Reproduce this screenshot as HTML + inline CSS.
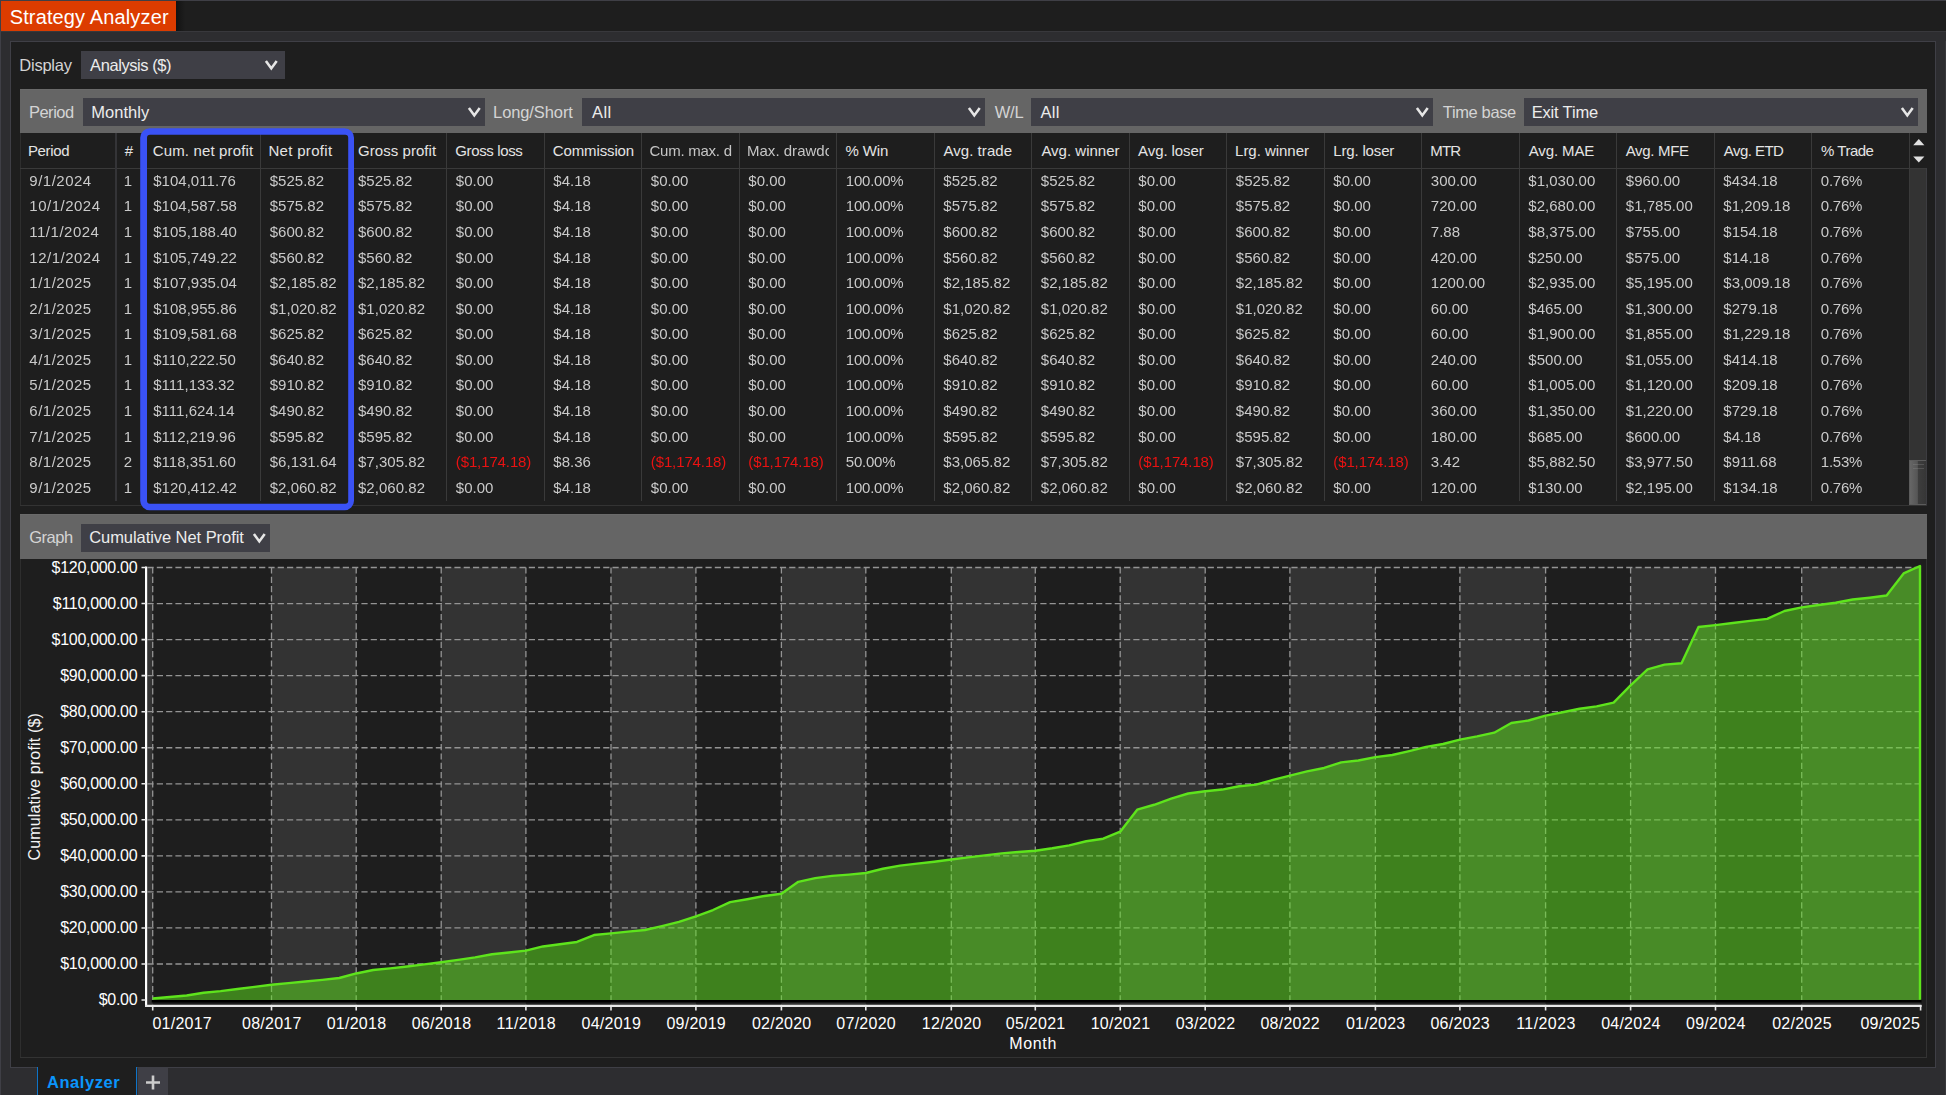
<!DOCTYPE html>
<html lang="en"><head><meta charset="utf-8"><title>Strategy Analyzer</title><style>
html,body{margin:0;padding:0}
body{width:1946px;height:1095px;overflow:hidden;position:relative;background:#2d2d30;font-family:"Liberation Sans",sans-serif}
.r{position:absolute;display:block}
.g{position:absolute;left:0;top:0;width:1946px;height:508px;will-change:transform}
.t{position:absolute;display:block;white-space:nowrap;line-height:1;font-family:"Liberation Sans",sans-serif}
</style></head><body>
<div class="r" style="left:0.00px;top:0.00px;width:1946.00px;height:1.00px;background:#3f3f46;"></div>
<div class="r" style="left:0.00px;top:0.00px;width:1.00px;height:1095.00px;background:#3f3f46;"></div>
<div class="r" style="left:1.00px;top:1.00px;width:1945.00px;height:30.20px;background:#1e1e1e;"></div>
<div class="r" style="left:1.00px;top:31.20px;width:1945.00px;height:1.20px;background:#38383c;"></div>
<div class="r" style="left:176px;top:1px;width:9px;height:30.2px;background:linear-gradient(90deg,#121212,#1e1e1e)"></div>
<div class="r" style="left:1945.00px;top:41.00px;width:1.00px;height:1054.00px;background:#38383c;"></div>
<div class="r" style="left:1.00px;top:1.00px;width:175.00px;height:30.30px;background:#dc3c00;"></div>
<span class="t" style="left:9.70px;top:7px;font-size:20px;color:#ffffff;letter-spacing:0.132px;">Strategy Analyzer</span>
<div class="r" style="left:10px;top:41px;width:1926px;height:1026.5px;box-sizing:border-box;border:1px solid #3f3f46;background:#1e1e1e"></div>
<span class="t" style="left:19.28px;top:57px;font-size:16.5px;color:#d4d4d4;letter-spacing:-0.229px;">Display</span>
<div class="r" style="left:80.50px;top:51.10px;width:204.60px;height:28.10px;background:#3f3f46;"></div>
<span class="t" style="left:90.10px;top:57px;font-size:16.5px;color:#ececec;letter-spacing:-0.433px;">Analysis ($)</span>
<svg class="r" style="left:261.90px;top:58.20px" width="18.60" height="13.40" viewBox="261.90 58.20 18.60 13.40"><path d="M265.80 61.20 L271.20 68.60 L276.60 61.20" fill="none" stroke="#e6e6e6" stroke-width="2.6" stroke-linejoin="miter"/></svg>
<div class="r" style="left:20.00px;top:88.50px;width:1907.00px;height:44.80px;background:#656565;"></div>
<div class="r" style="left:20.00px;top:88.50px;width:1907.00px;height:1.00px;background:#6a6a6a;"></div>
<span class="t" style="left:28.88px;top:104px;font-size:16.5px;color:#d4d4d4;letter-spacing:-0.466px;">Period</span>
<div class="r" style="left:83.00px;top:98.00px;width:402.00px;height:28.00px;background:#3f3f46;"></div>
<span class="t" style="left:91.28px;top:104px;font-size:16.5px;color:#ececec;letter-spacing:0.018px;">Monthly</span>
<svg class="r" style="left:465.20px;top:104.90px" width="18.60" height="13.40" viewBox="465.20 104.90 18.60 13.40"><path d="M469.10 107.90 L474.50 115.30 L479.90 107.90" fill="none" stroke="#e6e6e6" stroke-width="2.6" stroke-linejoin="miter"/></svg>
<span class="t" style="left:493.08px;top:104px;font-size:16.5px;color:#d4d4d4;letter-spacing:-0.103px;">Long/Short</span>
<div class="r" style="left:582.20px;top:98.00px;width:402.80px;height:28.00px;background:#3f3f46;"></div>
<span class="t" style="left:592.00px;top:104px;font-size:16.5px;color:#ececec;letter-spacing:0.387px;">All</span>
<svg class="r" style="left:964.70px;top:104.90px" width="18.60" height="13.40" viewBox="964.70 104.90 18.60 13.40"><path d="M968.60 107.90 L974.00 115.30 L979.40 107.90" fill="none" stroke="#e6e6e6" stroke-width="2.6" stroke-linejoin="miter"/></svg>
<span class="t" style="left:994.70px;top:104px;font-size:16.5px;color:#d4d4d4;letter-spacing:-0.178px;">W/L</span>
<div class="r" style="left:1031.00px;top:98.00px;width:402.00px;height:28.00px;background:#3f3f46;"></div>
<span class="t" style="left:1040.40px;top:104px;font-size:16.5px;color:#ececec;letter-spacing:0.387px;">All</span>
<svg class="r" style="left:1412.70px;top:104.90px" width="18.60" height="13.40" viewBox="1412.70 104.90 18.60 13.40"><path d="M1416.60 107.90 L1422.00 115.30 L1427.40 107.90" fill="none" stroke="#e6e6e6" stroke-width="2.6" stroke-linejoin="miter"/></svg>
<span class="t" style="left:1442.87px;top:104px;font-size:16.5px;color:#d4d4d4;letter-spacing:-0.380px;">Time base</span>
<div class="r" style="left:1523.50px;top:98.00px;width:394.50px;height:28.00px;background:#3f3f46;"></div>
<span class="t" style="left:1531.68px;top:104px;font-size:16.5px;color:#ececec;letter-spacing:-0.172px;">Exit Time</span>
<svg class="r" style="left:1897.70px;top:104.90px" width="18.60" height="13.40" viewBox="1897.70 104.90 18.60 13.40"><path d="M1901.60 107.90 L1907.00 115.30 L1912.40 107.90" fill="none" stroke="#e6e6e6" stroke-width="2.6" stroke-linejoin="miter"/></svg>
<div class="r" style="left:20.00px;top:133.30px;width:1.00px;height:372.50px;background:#2e2e2e;"></div>
<div class="r" style="left:20.00px;top:504.80px;width:1907.00px;height:1.00px;background:#333333;"></div>
<div class="r" style="left:1909.30px;top:168.00px;width:17.70px;height:336.80px;background:#333333;"></div>
<div class="r" style="left:20.00px;top:167.60px;width:1907.00px;height:1.00px;background:#3a3a3a;"></div>
<div class="r" style="left:145.80px;top:133.30px;width:1.00px;height:368.20px;background:#3a3a3a;"></div>
<div class="r" style="left:260.10px;top:133.30px;width:1.00px;height:368.20px;background:#3a3a3a;"></div>
<div class="r" style="left:348.50px;top:133.30px;width:1.00px;height:368.20px;background:#3a3a3a;"></div>
<div class="r" style="left:446.30px;top:133.30px;width:1.00px;height:368.20px;background:#3a3a3a;"></div>
<div class="r" style="left:543.80px;top:133.30px;width:1.00px;height:368.20px;background:#3a3a3a;"></div>
<div class="r" style="left:641.30px;top:133.30px;width:1.00px;height:368.20px;background:#3a3a3a;"></div>
<div class="r" style="left:738.80px;top:133.30px;width:1.00px;height:368.20px;background:#3a3a3a;"></div>
<div class="r" style="left:836.30px;top:133.30px;width:1.00px;height:368.20px;background:#3a3a3a;"></div>
<div class="r" style="left:933.80px;top:133.30px;width:1.00px;height:368.20px;background:#3a3a3a;"></div>
<div class="r" style="left:1031.30px;top:133.30px;width:1.00px;height:368.20px;background:#3a3a3a;"></div>
<div class="r" style="left:1128.80px;top:133.30px;width:1.00px;height:368.20px;background:#3a3a3a;"></div>
<div class="r" style="left:1226.30px;top:133.30px;width:1.00px;height:368.20px;background:#3a3a3a;"></div>
<div class="r" style="left:1323.80px;top:133.30px;width:1.00px;height:368.20px;background:#3a3a3a;"></div>
<div class="r" style="left:1421.30px;top:133.30px;width:1.00px;height:368.20px;background:#3a3a3a;"></div>
<div class="r" style="left:1518.80px;top:133.30px;width:1.00px;height:368.20px;background:#3a3a3a;"></div>
<div class="r" style="left:1616.30px;top:133.30px;width:1.00px;height:368.20px;background:#3a3a3a;"></div>
<div class="r" style="left:1713.80px;top:133.30px;width:1.00px;height:368.20px;background:#3a3a3a;"></div>
<div class="r" style="left:1811.30px;top:133.30px;width:1.00px;height:368.20px;background:#3a3a3a;"></div>
<div class="r" style="left:1908.80px;top:133.30px;width:1.00px;height:368.20px;background:#3a3a3a;"></div>
<div class="r" style="left:114.70px;top:133.30px;width:2.40px;height:368.20px;background:#343437;"></div>
<div class="r" style="left:1909px;top:459.6px;width:17.6px;height:45.6px;box-sizing:border-box;border:1px solid #5c5c5c;border-right-color:#4a4a4e;background:linear-gradient(90deg,#666666 0%,#565656 46%,#3d3d3d 52%,#363636 100%)"></div>
<div class="r" style="left:1913.30px;top:464.00px;width:10.70px;height:1.00px;background:rgba(140,140,140,0.32);"></div>
<div class="r" style="left:1913.30px;top:468.30px;width:10.70px;height:1.00px;background:rgba(140,140,140,0.32);"></div>
<div class="r" style="left:1926.30px;top:168.00px;width:0.70px;height:337.00px;background:#3c3c40;"></div>
<svg class="r" style="left:1909px;top:134px" width="18" height="33" viewBox="1909 134 18 33"><path d="M1913.2 145.2 L1918.8 139 L1924.4 145.2 Z" fill="#e0e0e0"/><path d="M1913.2 156.4 L1924.4 156.4 L1918.8 162.6 Z" fill="#e0e0e0"/></svg>
<span class="t" style="left:27.90px;top:143px;font-size:15px;color:#e4e4e4;letter-spacing:-0.344px;">Period</span>
<span class="t" style="left:124.80px;top:143px;font-size:15px;color:#e4e4e4;">#</span>
<span class="t" style="left:152.65px;top:143px;font-size:15px;color:#e4e4e4;letter-spacing:0.155px;">Cum. net profit</span>
<span class="t" style="left:268.40px;top:143px;font-size:15px;color:#e4e4e4;letter-spacing:0.324px;">Net profit</span>
<span class="t" style="left:358.05px;top:143px;font-size:15px;color:#e4e4e4;letter-spacing:0.048px;">Gross profit</span>
<span class="t" style="left:455.25px;top:143px;font-size:15px;color:#e4e4e4;letter-spacing:-0.365px;">Gross loss</span>
<span class="t" style="left:552.85px;top:143px;font-size:15px;color:#e4e4e4;letter-spacing:-0.132px;">Commission</span>
<span class="t" style="left:845.48px;top:143px;font-size:15px;color:#e4e4e4;letter-spacing:-0.107px;">% Win</span>
<span class="t" style="left:943.40px;top:143px;font-size:15px;color:#e4e4e4;letter-spacing:0.060px;">Avg. trade</span>
<span class="t" style="left:1041.40px;top:143px;font-size:15px;color:#e4e4e4;">Avg. winner</span>
<span class="t" style="left:1138.10px;top:143px;font-size:15px;color:#e4e4e4;letter-spacing:-0.093px;">Avg. loser</span>
<span class="t" style="left:1235.10px;top:143px;font-size:15px;color:#e4e4e4;letter-spacing:-0.037px;">Lrg. winner</span>
<span class="t" style="left:1333.20px;top:143px;font-size:15px;color:#e4e4e4;letter-spacing:-0.153px;">Lrg. loser</span>
<span class="t" style="left:1430.20px;top:143px;font-size:15px;color:#e4e4e4;letter-spacing:-0.764px;">MTR</span>
<span class="t" style="left:1528.70px;top:143px;font-size:15px;color:#e4e4e4;letter-spacing:-0.115px;">Avg. MAE</span>
<span class="t" style="left:1625.70px;top:143px;font-size:15px;color:#e4e4e4;letter-spacing:-0.309px;">Avg. MFE</span>
<span class="t" style="left:1723.80px;top:143px;font-size:15px;color:#e4e4e4;letter-spacing:-0.539px;">Avg. ETD</span>
<span class="t" style="left:1821.07px;top:143px;font-size:15px;color:#e4e4e4;letter-spacing:-0.495px;">% Trade</span>
<div class="r" style="left:20.00px;top:514.40px;width:1907.00px;height:44.50px;background:#656565;"></div>
<div class="r" style="left:20.00px;top:514.40px;width:1907.00px;height:1.00px;background:#6a6a6a;"></div>
<span class="t" style="left:29.17px;top:529px;font-size:16.5px;color:#d4d4d4;letter-spacing:-0.452px;">Graph</span>
<div class="r" style="left:81.00px;top:524.00px;width:189.00px;height:28.00px;background:#3f3f46;"></div>
<span class="t" style="left:89.18px;top:529px;font-size:16.5px;color:#ececec;letter-spacing:-0.061px;">Cumulative Net Profit</span>
<svg class="r" style="left:249.90px;top:530.90px" width="18.60" height="13.40" viewBox="249.90 530.90 18.60 13.40"><path d="M253.80 533.90 L259.20 541.30 L264.60 533.90" fill="none" stroke="#e6e6e6" stroke-width="2.6" stroke-linejoin="miter"/></svg>
<div class="r" style="left:20.00px;top:558.90px;width:1.00px;height:498.60px;background:#2e2e2e;"></div>
<div class="r" style="left:1926.00px;top:558.90px;width:1.00px;height:498.60px;background:#333333;"></div>
<div class="r" style="left:20.00px;top:1056.50px;width:1907.00px;height:1.00px;background:#333333;"></div>
<svg class="r" style="left:0;top:555px" width="1946" height="500" viewBox="0 555 1946 500" font-family="Liberation Sans, sans-serif"><rect x="147.2" y="567.4" width="5.50" height="437.40" fill="#333333"/><rect x="271.50" y="567.4" width="84.70" height="437.40" fill="#333333"/><rect x="441.20" y="567.4" width="84.70" height="437.40" fill="#333333"/><rect x="611.00" y="567.4" width="84.90" height="437.40" fill="#333333"/><rect x="781.40" y="567.4" width="84.40" height="437.40" fill="#333333"/><rect x="951.30" y="567.4" width="84.00" height="437.40" fill="#333333"/><rect x="1120.20" y="567.4" width="85.00" height="437.40" fill="#333333"/><rect x="1289.90" y="567.4" width="85.50" height="437.40" fill="#333333"/><rect x="1459.90" y="567.4" width="85.70" height="437.40" fill="#333333"/><rect x="1630.60" y="567.4" width="84.90" height="437.40" fill="#333333"/><rect x="1801.70" y="567.4" width="118.90" height="437.40" fill="#333333"/><path d="M147.5 964.00H1921M147.5 927.96H1921M147.5 891.91H1921M147.5 855.87H1921M147.5 819.82H1921M147.5 783.78H1921M147.5 747.73H1921M147.5 711.69H1921M147.5 675.64H1921M147.5 639.60H1921M147.5 603.55H1921M147.5 567.51H1921M152.70 567.4V1004.8M271.50 567.4V1004.8M356.20 567.4V1004.8M441.20 567.4V1004.8M525.90 567.4V1004.8M611.00 567.4V1004.8M695.90 567.4V1004.8M781.40 567.4V1004.8M865.80 567.4V1004.8M951.30 567.4V1004.8M1035.30 567.4V1004.8M1120.20 567.4V1004.8M1205.20 567.4V1004.8M1289.90 567.4V1004.8M1375.40 567.4V1004.8M1459.90 567.4V1004.8M1545.60 567.4V1004.8M1630.60 567.4V1004.8M1715.50 567.4V1004.8M1801.70 567.4V1004.8" fill="none" stroke="#949494" stroke-width="1.3" stroke-dasharray="6.2 3.1"/><path d="M152.70 998.50 L169.67 997.05 L186.64 995.44 L203.61 992.78 L220.59 991.15 L237.56 989.01 L254.53 986.87 L271.50 984.74 L288.44 983.12 L305.38 981.50 L322.32 979.87 L339.26 977.98 L356.20 973.45 L373.20 970.03 L390.20 968.36 L407.20 966.49 L424.20 964.35 L441.20 962.20 L458.14 959.83 L475.08 957.35 L492.02 954.28 L508.96 952.54 L525.90 950.67 L542.92 946.45 L559.94 944.25 L576.96 941.95 L593.98 935.03 L611.00 933.40 L627.98 931.68 L644.96 929.96 L661.94 926.05 L678.92 921.87 L695.90 916.30 L713.00 910.03 L730.10 902.13 L747.20 899.20 L764.30 895.96 L781.40 893.78 L798.28 881.81 L815.16 878.09 L832.04 875.92 L848.92 874.60 L865.80 873.00 L882.90 868.78 L900.00 865.66 L917.10 863.65 L934.20 861.69 L951.30 859.44 L968.10 857.36 L984.90 855.35 L1001.70 853.37 L1018.50 852.02 L1035.30 850.69 L1052.28 848.25 L1069.26 845.31 L1086.24 841.29 L1103.22 838.71 L1120.20 831.67 L1137.20 809.70 L1154.20 804.77 L1171.20 798.59 L1188.20 793.52 L1205.20 791.30 L1222.14 789.56 L1239.08 786.21 L1256.02 784.57 L1272.96 779.89 L1289.90 775.60 L1307.00 771.40 L1324.10 767.97 L1341.20 762.40 L1358.30 760.45 L1375.40 757.18 L1392.30 755.01 L1409.20 751.06 L1426.10 746.82 L1443.00 744.02 L1459.90 739.56 L1477.04 736.43 L1494.18 732.68 L1511.32 722.98 L1528.46 720.51 L1545.60 715.56 L1562.60 712.20 L1579.60 708.80 L1596.60 706.43 L1613.60 702.70 L1630.60 685.40 L1647.58 669.38 L1664.56 664.62 L1681.54 663.30 L1698.52 627.03 L1715.50 625.14 L1732.74 623.06 L1749.98 620.90 L1767.22 618.88 L1784.46 611.00 L1801.70 607.32 L1818.69 605.06 L1835.67 602.75 L1852.66 599.47 L1869.64 597.70 L1886.63 595.55 L1903.61 573.45 L1920.00 566.02 L1920.00 1000.05 L152.70 1000.05 Z" fill="#5ee41c" fill-opacity="0.50"/><path d="M151.7 1001.25H1921.5" stroke="#000000" stroke-width="2.5"/><path d="M152.70 998.50 L169.67 997.05 L186.64 995.44 L203.61 992.78 L220.59 991.15 L237.56 989.01 L254.53 986.87 L271.50 984.74 L288.44 983.12 L305.38 981.50 L322.32 979.87 L339.26 977.98 L356.20 973.45 L373.20 970.03 L390.20 968.36 L407.20 966.49 L424.20 964.35 L441.20 962.20 L458.14 959.83 L475.08 957.35 L492.02 954.28 L508.96 952.54 L525.90 950.67 L542.92 946.45 L559.94 944.25 L576.96 941.95 L593.98 935.03 L611.00 933.40 L627.98 931.68 L644.96 929.96 L661.94 926.05 L678.92 921.87 L695.90 916.30 L713.00 910.03 L730.10 902.13 L747.20 899.20 L764.30 895.96 L781.40 893.78 L798.28 881.81 L815.16 878.09 L832.04 875.92 L848.92 874.60 L865.80 873.00 L882.90 868.78 L900.00 865.66 L917.10 863.65 L934.20 861.69 L951.30 859.44 L968.10 857.36 L984.90 855.35 L1001.70 853.37 L1018.50 852.02 L1035.30 850.69 L1052.28 848.25 L1069.26 845.31 L1086.24 841.29 L1103.22 838.71 L1120.20 831.67 L1137.20 809.70 L1154.20 804.77 L1171.20 798.59 L1188.20 793.52 L1205.20 791.30 L1222.14 789.56 L1239.08 786.21 L1256.02 784.57 L1272.96 779.89 L1289.90 775.60 L1307.00 771.40 L1324.10 767.97 L1341.20 762.40 L1358.30 760.45 L1375.40 757.18 L1392.30 755.01 L1409.20 751.06 L1426.10 746.82 L1443.00 744.02 L1459.90 739.56 L1477.04 736.43 L1494.18 732.68 L1511.32 722.98 L1528.46 720.51 L1545.60 715.56 L1562.60 712.20 L1579.60 708.80 L1596.60 706.43 L1613.60 702.70 L1630.60 685.40 L1647.58 669.38 L1664.56 664.62 L1681.54 663.30 L1698.52 627.03 L1715.50 625.14 L1732.74 623.06 L1749.98 620.90 L1767.22 618.88 L1784.46 611.00 L1801.70 607.32 L1818.69 605.06 L1835.67 602.75 L1852.66 599.47 L1869.64 597.70 L1886.63 595.55 L1903.61 573.45 L1920.00 566.02 L1920.00 999.65" fill="none" stroke="#5ee41c" stroke-width="2.4" stroke-linejoin="round"/><path d="M146.1 566.4V1006.8" stroke="#ffffff" stroke-width="2.2"/><path d="M145 1005.85H1921.6" stroke="#e8e8e8" stroke-width="2.2"/><path d="M141.5 1000.05H146M141.5 964.00H146M141.5 927.96H146M141.5 891.91H146M141.5 855.87H146M141.5 819.82H146M141.5 783.78H146M141.5 747.73H146M141.5 711.69H146M141.5 675.64H146M141.5 639.60H146M141.5 603.55H146M141.5 567.51H146M152.70 1005V1010.6M271.50 1005V1010.6M356.20 1005V1010.6M441.20 1005V1010.6M525.90 1005V1010.6M611.00 1005V1010.6M695.90 1005V1010.6M781.40 1005V1010.6M865.80 1005V1010.6M951.30 1005V1010.6M1035.30 1005V1010.6M1120.20 1005V1010.6M1205.20 1005V1010.6M1289.90 1005V1010.6M1375.40 1005V1010.6M1459.90 1005V1010.6M1545.60 1005V1010.6M1630.60 1005V1010.6M1715.50 1005V1010.6M1801.70 1005V1010.6M1920.60 1005V1010.6" fill="none" stroke="#e8e8e8" stroke-width="1.6"/></svg>
<span class="t" style="left:98.76px;top:992px;font-size:16px;color:#ffffff;letter-spacing:-0.300px;">$0.00</span>
<span class="t" style="left:60.22px;top:956px;font-size:16px;color:#ffffff;letter-spacing:-0.300px;">$10,000.00</span>
<span class="t" style="left:60.22px;top:920px;font-size:16px;color:#ffffff;letter-spacing:-0.300px;">$20,000.00</span>
<span class="t" style="left:60.22px;top:884px;font-size:16px;color:#ffffff;letter-spacing:-0.300px;">$30,000.00</span>
<span class="t" style="left:60.22px;top:848px;font-size:16px;color:#ffffff;letter-spacing:-0.300px;">$40,000.00</span>
<span class="t" style="left:60.22px;top:812px;font-size:16px;color:#ffffff;letter-spacing:-0.300px;">$50,000.00</span>
<span class="t" style="left:60.22px;top:776px;font-size:16px;color:#ffffff;letter-spacing:-0.300px;">$60,000.00</span>
<span class="t" style="left:60.22px;top:740px;font-size:16px;color:#ffffff;letter-spacing:-0.300px;">$70,000.00</span>
<span class="t" style="left:60.22px;top:704px;font-size:16px;color:#ffffff;letter-spacing:-0.300px;">$80,000.00</span>
<span class="t" style="left:60.22px;top:668px;font-size:16px;color:#ffffff;letter-spacing:-0.300px;">$90,000.00</span>
<span class="t" style="left:51.62px;top:632px;font-size:16px;color:#ffffff;letter-spacing:-0.300px;">$100,000.00</span>
<span class="t" style="left:52.81px;top:596px;font-size:16px;color:#ffffff;letter-spacing:-0.300px;">$110,000.00</span>
<span class="t" style="left:51.62px;top:560px;font-size:16px;color:#ffffff;letter-spacing:-0.300px;">$120,000.00</span>
<span class="t" style="left:152.40px;top:1016px;font-size:16px;color:#ffffff;letter-spacing:0.252px;">01/2017</span>
<span class="t" style="left:242.03px;top:1016px;font-size:16px;color:#ffffff;letter-spacing:0.252px;">08/2017</span>
<span class="t" style="left:326.73px;top:1016px;font-size:16px;color:#ffffff;letter-spacing:0.252px;">01/2018</span>
<span class="t" style="left:411.73px;top:1016px;font-size:16px;color:#ffffff;letter-spacing:0.252px;">06/2018</span>
<span class="t" style="left:496.51px;top:1016px;font-size:16px;color:#ffffff;letter-spacing:0.421px;">11/2018</span>
<span class="t" style="left:581.53px;top:1016px;font-size:16px;color:#ffffff;letter-spacing:0.252px;">04/2019</span>
<span class="t" style="left:666.43px;top:1016px;font-size:16px;color:#ffffff;letter-spacing:0.252px;">09/2019</span>
<span class="t" style="left:751.93px;top:1016px;font-size:16px;color:#ffffff;letter-spacing:0.252px;">02/2020</span>
<span class="t" style="left:836.33px;top:1016px;font-size:16px;color:#ffffff;letter-spacing:0.252px;">07/2020</span>
<span class="t" style="left:921.83px;top:1016px;font-size:16px;color:#ffffff;letter-spacing:0.252px;">12/2020</span>
<span class="t" style="left:1005.83px;top:1016px;font-size:16px;color:#ffffff;letter-spacing:0.252px;">05/2021</span>
<span class="t" style="left:1090.73px;top:1016px;font-size:16px;color:#ffffff;letter-spacing:0.252px;">10/2021</span>
<span class="t" style="left:1175.73px;top:1016px;font-size:16px;color:#ffffff;letter-spacing:0.252px;">03/2022</span>
<span class="t" style="left:1260.43px;top:1016px;font-size:16px;color:#ffffff;letter-spacing:0.252px;">08/2022</span>
<span class="t" style="left:1345.93px;top:1016px;font-size:16px;color:#ffffff;letter-spacing:0.252px;">01/2023</span>
<span class="t" style="left:1430.43px;top:1016px;font-size:16px;color:#ffffff;letter-spacing:0.252px;">06/2023</span>
<span class="t" style="left:1516.21px;top:1016px;font-size:16px;color:#ffffff;letter-spacing:0.421px;">11/2023</span>
<span class="t" style="left:1601.13px;top:1016px;font-size:16px;color:#ffffff;letter-spacing:0.252px;">04/2024</span>
<span class="t" style="left:1686.03px;top:1016px;font-size:16px;color:#ffffff;letter-spacing:0.252px;">09/2024</span>
<span class="t" style="left:1772.23px;top:1016px;font-size:16px;color:#ffffff;letter-spacing:0.252px;">02/2025</span>
<span class="t" style="left:1860.45px;top:1016px;font-size:16px;color:#ffffff;letter-spacing:0.252px;">09/2025</span>
<span class="t" style="left:1009.27px;top:1036px;font-size:16px;color:#ffffff;letter-spacing:0.646px;">Month</span>
<span class="t" style="left:0;top:0;font-size:16px;color:#f4f4f4;letter-spacing:0.164px;transform-origin:0 0;transform:translate(26.76px,860.5px) rotate(-90deg)">Cumulative profit ($)</span>
<div class="r" style="left:37.00px;top:1067.00px;width:100.00px;height:28.00px;background:#1e1e1e;"></div>
<div class="r" style="left:37.00px;top:1067.00px;width:1.20px;height:28.00px;background:#0e74c8;"></div>
<div class="r" style="left:135.80px;top:1067.00px;width:1.20px;height:28.00px;background:#0e74c8;"></div>
<span class="t" style="left:47.00px;top:1074px;font-size:16.5px;color:#0a95fc;letter-spacing:0.552px;font-weight:bold;">Analyzer</span>
<div class="r" style="left:137.60px;top:1067.50px;width:30.90px;height:27.50px;background:#3f3f46;"></div>
<svg class="r" style="left:140px;top:1070px" width="26" height="25" viewBox="140 1070 26 25"><path d="M146 1082.5H160M153 1075.5V1089.5" stroke="#cccccc" stroke-width="2.6" fill="none"/></svg>
<div class="g">
<span class="t" style="left:649.55px;top:141px;padding-top:2px;height:20px;width:83.45px;overflow:hidden;font-size:15px;color:#c6c6c6;letter-spacing:-0.256px">Cum. max. d<span style="margin-left:4px">rawdown</span></span>
<span class="t" style="left:747.00px;top:141px;padding-top:2px;height:20px;width:82.20px;overflow:hidden;font-size:15px;color:#c6c6c6;letter-spacing:0.017px">Max. drawdown</span>
<span class="t" style="left:29.30px;top:173px;font-size:15px;color:#cacaca;letter-spacing:0.500px;">9/1/2024</span>
<span class="t" style="left:123.70px;top:173px;font-size:15px;color:#cacaca;letter-spacing:0.030px;">1</span>
<span class="t" style="left:153.20px;top:173px;font-size:15px;color:#cacaca;letter-spacing:0.030px;">$104,011.76</span>
<span class="t" style="left:269.70px;top:173px;font-size:15px;color:#cacaca;letter-spacing:0.030px;">$525.82</span>
<span class="t" style="left:358.00px;top:173px;font-size:15px;color:#cacaca;letter-spacing:0.030px;">$525.82</span>
<span class="t" style="left:455.80px;top:173px;font-size:15px;color:#cacaca;letter-spacing:0.030px;">$0.00</span>
<span class="t" style="left:553.30px;top:173px;font-size:15px;color:#cacaca;letter-spacing:0.030px;">$4.18</span>
<span class="t" style="left:650.80px;top:173px;font-size:15px;color:#cacaca;letter-spacing:0.030px;">$0.00</span>
<span class="t" style="left:748.30px;top:173px;font-size:15px;color:#cacaca;letter-spacing:0.030px;">$0.00</span>
<span class="t" style="left:845.80px;top:173px;font-size:15px;color:#cacaca;letter-spacing:-0.220px;">100.00%</span>
<span class="t" style="left:943.30px;top:173px;font-size:15px;color:#cacaca;letter-spacing:0.030px;">$525.82</span>
<span class="t" style="left:1040.80px;top:173px;font-size:15px;color:#cacaca;letter-spacing:0.030px;">$525.82</span>
<span class="t" style="left:1138.30px;top:173px;font-size:15px;color:#cacaca;letter-spacing:0.030px;">$0.00</span>
<span class="t" style="left:1235.80px;top:173px;font-size:15px;color:#cacaca;letter-spacing:0.030px;">$525.82</span>
<span class="t" style="left:1333.30px;top:173px;font-size:15px;color:#cacaca;letter-spacing:0.030px;">$0.00</span>
<span class="t" style="left:1430.80px;top:173px;font-size:15px;color:#cacaca;letter-spacing:0.030px;">300.00</span>
<span class="t" style="left:1528.30px;top:173px;font-size:15px;color:#cacaca;letter-spacing:0.030px;">$1,030.00</span>
<span class="t" style="left:1625.80px;top:173px;font-size:15px;color:#cacaca;letter-spacing:0.030px;">$960.00</span>
<span class="t" style="left:1723.30px;top:173px;font-size:15px;color:#cacaca;letter-spacing:0.030px;">$434.18</span>
<span class="t" style="left:1820.80px;top:173px;font-size:15px;color:#cacaca;letter-spacing:-0.220px;">0.76%</span>
<span class="t" style="left:29.30px;top:198px;font-size:15px;color:#cacaca;letter-spacing:0.500px;">10/1/2024</span>
<span class="t" style="left:123.70px;top:198px;font-size:15px;color:#cacaca;letter-spacing:0.030px;">1</span>
<span class="t" style="left:153.20px;top:198px;font-size:15px;color:#cacaca;letter-spacing:0.030px;">$104,587.58</span>
<span class="t" style="left:269.70px;top:198px;font-size:15px;color:#cacaca;letter-spacing:0.030px;">$575.82</span>
<span class="t" style="left:358.00px;top:198px;font-size:15px;color:#cacaca;letter-spacing:0.030px;">$575.82</span>
<span class="t" style="left:455.80px;top:198px;font-size:15px;color:#cacaca;letter-spacing:0.030px;">$0.00</span>
<span class="t" style="left:553.30px;top:198px;font-size:15px;color:#cacaca;letter-spacing:0.030px;">$4.18</span>
<span class="t" style="left:650.80px;top:198px;font-size:15px;color:#cacaca;letter-spacing:0.030px;">$0.00</span>
<span class="t" style="left:748.30px;top:198px;font-size:15px;color:#cacaca;letter-spacing:0.030px;">$0.00</span>
<span class="t" style="left:845.80px;top:198px;font-size:15px;color:#cacaca;letter-spacing:-0.220px;">100.00%</span>
<span class="t" style="left:943.30px;top:198px;font-size:15px;color:#cacaca;letter-spacing:0.030px;">$575.82</span>
<span class="t" style="left:1040.80px;top:198px;font-size:15px;color:#cacaca;letter-spacing:0.030px;">$575.82</span>
<span class="t" style="left:1138.30px;top:198px;font-size:15px;color:#cacaca;letter-spacing:0.030px;">$0.00</span>
<span class="t" style="left:1235.80px;top:198px;font-size:15px;color:#cacaca;letter-spacing:0.030px;">$575.82</span>
<span class="t" style="left:1333.30px;top:198px;font-size:15px;color:#cacaca;letter-spacing:0.030px;">$0.00</span>
<span class="t" style="left:1430.80px;top:198px;font-size:15px;color:#cacaca;letter-spacing:0.030px;">720.00</span>
<span class="t" style="left:1528.30px;top:198px;font-size:15px;color:#cacaca;letter-spacing:0.030px;">$2,680.00</span>
<span class="t" style="left:1625.80px;top:198px;font-size:15px;color:#cacaca;letter-spacing:0.030px;">$1,785.00</span>
<span class="t" style="left:1723.30px;top:198px;font-size:15px;color:#cacaca;letter-spacing:0.030px;">$1,209.18</span>
<span class="t" style="left:1820.80px;top:198px;font-size:15px;color:#cacaca;letter-spacing:-0.220px;">0.76%</span>
<span class="t" style="left:29.30px;top:224px;font-size:15px;color:#cacaca;letter-spacing:0.500px;">11/1/2024</span>
<span class="t" style="left:123.70px;top:224px;font-size:15px;color:#cacaca;letter-spacing:0.030px;">1</span>
<span class="t" style="left:153.20px;top:224px;font-size:15px;color:#cacaca;letter-spacing:0.030px;">$105,188.40</span>
<span class="t" style="left:269.70px;top:224px;font-size:15px;color:#cacaca;letter-spacing:0.030px;">$600.82</span>
<span class="t" style="left:358.00px;top:224px;font-size:15px;color:#cacaca;letter-spacing:0.030px;">$600.82</span>
<span class="t" style="left:455.80px;top:224px;font-size:15px;color:#cacaca;letter-spacing:0.030px;">$0.00</span>
<span class="t" style="left:553.30px;top:224px;font-size:15px;color:#cacaca;letter-spacing:0.030px;">$4.18</span>
<span class="t" style="left:650.80px;top:224px;font-size:15px;color:#cacaca;letter-spacing:0.030px;">$0.00</span>
<span class="t" style="left:748.30px;top:224px;font-size:15px;color:#cacaca;letter-spacing:0.030px;">$0.00</span>
<span class="t" style="left:845.80px;top:224px;font-size:15px;color:#cacaca;letter-spacing:-0.220px;">100.00%</span>
<span class="t" style="left:943.30px;top:224px;font-size:15px;color:#cacaca;letter-spacing:0.030px;">$600.82</span>
<span class="t" style="left:1040.80px;top:224px;font-size:15px;color:#cacaca;letter-spacing:0.030px;">$600.82</span>
<span class="t" style="left:1138.30px;top:224px;font-size:15px;color:#cacaca;letter-spacing:0.030px;">$0.00</span>
<span class="t" style="left:1235.80px;top:224px;font-size:15px;color:#cacaca;letter-spacing:0.030px;">$600.82</span>
<span class="t" style="left:1333.30px;top:224px;font-size:15px;color:#cacaca;letter-spacing:0.030px;">$0.00</span>
<span class="t" style="left:1430.80px;top:224px;font-size:15px;color:#cacaca;letter-spacing:0.030px;">7.88</span>
<span class="t" style="left:1528.30px;top:224px;font-size:15px;color:#cacaca;letter-spacing:0.030px;">$8,375.00</span>
<span class="t" style="left:1625.80px;top:224px;font-size:15px;color:#cacaca;letter-spacing:0.030px;">$755.00</span>
<span class="t" style="left:1723.30px;top:224px;font-size:15px;color:#cacaca;letter-spacing:0.030px;">$154.18</span>
<span class="t" style="left:1820.80px;top:224px;font-size:15px;color:#cacaca;letter-spacing:-0.220px;">0.76%</span>
<span class="t" style="left:29.30px;top:250px;font-size:15px;color:#cacaca;letter-spacing:0.500px;">12/1/2024</span>
<span class="t" style="left:123.70px;top:250px;font-size:15px;color:#cacaca;letter-spacing:0.030px;">1</span>
<span class="t" style="left:153.20px;top:250px;font-size:15px;color:#cacaca;letter-spacing:0.030px;">$105,749.22</span>
<span class="t" style="left:269.70px;top:250px;font-size:15px;color:#cacaca;letter-spacing:0.030px;">$560.82</span>
<span class="t" style="left:358.00px;top:250px;font-size:15px;color:#cacaca;letter-spacing:0.030px;">$560.82</span>
<span class="t" style="left:455.80px;top:250px;font-size:15px;color:#cacaca;letter-spacing:0.030px;">$0.00</span>
<span class="t" style="left:553.30px;top:250px;font-size:15px;color:#cacaca;letter-spacing:0.030px;">$4.18</span>
<span class="t" style="left:650.80px;top:250px;font-size:15px;color:#cacaca;letter-spacing:0.030px;">$0.00</span>
<span class="t" style="left:748.30px;top:250px;font-size:15px;color:#cacaca;letter-spacing:0.030px;">$0.00</span>
<span class="t" style="left:845.80px;top:250px;font-size:15px;color:#cacaca;letter-spacing:-0.220px;">100.00%</span>
<span class="t" style="left:943.30px;top:250px;font-size:15px;color:#cacaca;letter-spacing:0.030px;">$560.82</span>
<span class="t" style="left:1040.80px;top:250px;font-size:15px;color:#cacaca;letter-spacing:0.030px;">$560.82</span>
<span class="t" style="left:1138.30px;top:250px;font-size:15px;color:#cacaca;letter-spacing:0.030px;">$0.00</span>
<span class="t" style="left:1235.80px;top:250px;font-size:15px;color:#cacaca;letter-spacing:0.030px;">$560.82</span>
<span class="t" style="left:1333.30px;top:250px;font-size:15px;color:#cacaca;letter-spacing:0.030px;">$0.00</span>
<span class="t" style="left:1430.80px;top:250px;font-size:15px;color:#cacaca;letter-spacing:0.030px;">420.00</span>
<span class="t" style="left:1528.30px;top:250px;font-size:15px;color:#cacaca;letter-spacing:0.030px;">$250.00</span>
<span class="t" style="left:1625.80px;top:250px;font-size:15px;color:#cacaca;letter-spacing:0.030px;">$575.00</span>
<span class="t" style="left:1723.30px;top:250px;font-size:15px;color:#cacaca;letter-spacing:0.030px;">$14.18</span>
<span class="t" style="left:1820.80px;top:250px;font-size:15px;color:#cacaca;letter-spacing:-0.220px;">0.76%</span>
<span class="t" style="left:29.30px;top:275px;font-size:15px;color:#cacaca;letter-spacing:0.500px;">1/1/2025</span>
<span class="t" style="left:123.70px;top:275px;font-size:15px;color:#cacaca;letter-spacing:0.030px;">1</span>
<span class="t" style="left:153.20px;top:275px;font-size:15px;color:#cacaca;letter-spacing:0.030px;">$107,935.04</span>
<span class="t" style="left:269.70px;top:275px;font-size:15px;color:#cacaca;letter-spacing:0.030px;">$2,185.82</span>
<span class="t" style="left:358.00px;top:275px;font-size:15px;color:#cacaca;letter-spacing:0.030px;">$2,185.82</span>
<span class="t" style="left:455.80px;top:275px;font-size:15px;color:#cacaca;letter-spacing:0.030px;">$0.00</span>
<span class="t" style="left:553.30px;top:275px;font-size:15px;color:#cacaca;letter-spacing:0.030px;">$4.18</span>
<span class="t" style="left:650.80px;top:275px;font-size:15px;color:#cacaca;letter-spacing:0.030px;">$0.00</span>
<span class="t" style="left:748.30px;top:275px;font-size:15px;color:#cacaca;letter-spacing:0.030px;">$0.00</span>
<span class="t" style="left:845.80px;top:275px;font-size:15px;color:#cacaca;letter-spacing:-0.220px;">100.00%</span>
<span class="t" style="left:943.30px;top:275px;font-size:15px;color:#cacaca;letter-spacing:0.030px;">$2,185.82</span>
<span class="t" style="left:1040.80px;top:275px;font-size:15px;color:#cacaca;letter-spacing:0.030px;">$2,185.82</span>
<span class="t" style="left:1138.30px;top:275px;font-size:15px;color:#cacaca;letter-spacing:0.030px;">$0.00</span>
<span class="t" style="left:1235.80px;top:275px;font-size:15px;color:#cacaca;letter-spacing:0.030px;">$2,185.82</span>
<span class="t" style="left:1333.30px;top:275px;font-size:15px;color:#cacaca;letter-spacing:0.030px;">$0.00</span>
<span class="t" style="left:1430.80px;top:275px;font-size:15px;color:#cacaca;letter-spacing:0.030px;">1200.00</span>
<span class="t" style="left:1528.30px;top:275px;font-size:15px;color:#cacaca;letter-spacing:0.030px;">$2,935.00</span>
<span class="t" style="left:1625.80px;top:275px;font-size:15px;color:#cacaca;letter-spacing:0.030px;">$5,195.00</span>
<span class="t" style="left:1723.30px;top:275px;font-size:15px;color:#cacaca;letter-spacing:0.030px;">$3,009.18</span>
<span class="t" style="left:1820.80px;top:275px;font-size:15px;color:#cacaca;letter-spacing:-0.220px;">0.76%</span>
<span class="t" style="left:29.30px;top:301px;font-size:15px;color:#cacaca;letter-spacing:0.500px;">2/1/2025</span>
<span class="t" style="left:123.70px;top:301px;font-size:15px;color:#cacaca;letter-spacing:0.030px;">1</span>
<span class="t" style="left:153.20px;top:301px;font-size:15px;color:#cacaca;letter-spacing:0.030px;">$108,955.86</span>
<span class="t" style="left:269.70px;top:301px;font-size:15px;color:#cacaca;letter-spacing:0.030px;">$1,020.82</span>
<span class="t" style="left:358.00px;top:301px;font-size:15px;color:#cacaca;letter-spacing:0.030px;">$1,020.82</span>
<span class="t" style="left:455.80px;top:301px;font-size:15px;color:#cacaca;letter-spacing:0.030px;">$0.00</span>
<span class="t" style="left:553.30px;top:301px;font-size:15px;color:#cacaca;letter-spacing:0.030px;">$4.18</span>
<span class="t" style="left:650.80px;top:301px;font-size:15px;color:#cacaca;letter-spacing:0.030px;">$0.00</span>
<span class="t" style="left:748.30px;top:301px;font-size:15px;color:#cacaca;letter-spacing:0.030px;">$0.00</span>
<span class="t" style="left:845.80px;top:301px;font-size:15px;color:#cacaca;letter-spacing:-0.220px;">100.00%</span>
<span class="t" style="left:943.30px;top:301px;font-size:15px;color:#cacaca;letter-spacing:0.030px;">$1,020.82</span>
<span class="t" style="left:1040.80px;top:301px;font-size:15px;color:#cacaca;letter-spacing:0.030px;">$1,020.82</span>
<span class="t" style="left:1138.30px;top:301px;font-size:15px;color:#cacaca;letter-spacing:0.030px;">$0.00</span>
<span class="t" style="left:1235.80px;top:301px;font-size:15px;color:#cacaca;letter-spacing:0.030px;">$1,020.82</span>
<span class="t" style="left:1333.30px;top:301px;font-size:15px;color:#cacaca;letter-spacing:0.030px;">$0.00</span>
<span class="t" style="left:1430.80px;top:301px;font-size:15px;color:#cacaca;letter-spacing:0.030px;">60.00</span>
<span class="t" style="left:1528.30px;top:301px;font-size:15px;color:#cacaca;letter-spacing:0.030px;">$465.00</span>
<span class="t" style="left:1625.80px;top:301px;font-size:15px;color:#cacaca;letter-spacing:0.030px;">$1,300.00</span>
<span class="t" style="left:1723.30px;top:301px;font-size:15px;color:#cacaca;letter-spacing:0.030px;">$279.18</span>
<span class="t" style="left:1820.80px;top:301px;font-size:15px;color:#cacaca;letter-spacing:-0.220px;">0.76%</span>
<span class="t" style="left:29.30px;top:326px;font-size:15px;color:#cacaca;letter-spacing:0.500px;">3/1/2025</span>
<span class="t" style="left:123.70px;top:326px;font-size:15px;color:#cacaca;letter-spacing:0.030px;">1</span>
<span class="t" style="left:153.20px;top:326px;font-size:15px;color:#cacaca;letter-spacing:0.030px;">$109,581.68</span>
<span class="t" style="left:269.70px;top:326px;font-size:15px;color:#cacaca;letter-spacing:0.030px;">$625.82</span>
<span class="t" style="left:358.00px;top:326px;font-size:15px;color:#cacaca;letter-spacing:0.030px;">$625.82</span>
<span class="t" style="left:455.80px;top:326px;font-size:15px;color:#cacaca;letter-spacing:0.030px;">$0.00</span>
<span class="t" style="left:553.30px;top:326px;font-size:15px;color:#cacaca;letter-spacing:0.030px;">$4.18</span>
<span class="t" style="left:650.80px;top:326px;font-size:15px;color:#cacaca;letter-spacing:0.030px;">$0.00</span>
<span class="t" style="left:748.30px;top:326px;font-size:15px;color:#cacaca;letter-spacing:0.030px;">$0.00</span>
<span class="t" style="left:845.80px;top:326px;font-size:15px;color:#cacaca;letter-spacing:-0.220px;">100.00%</span>
<span class="t" style="left:943.30px;top:326px;font-size:15px;color:#cacaca;letter-spacing:0.030px;">$625.82</span>
<span class="t" style="left:1040.80px;top:326px;font-size:15px;color:#cacaca;letter-spacing:0.030px;">$625.82</span>
<span class="t" style="left:1138.30px;top:326px;font-size:15px;color:#cacaca;letter-spacing:0.030px;">$0.00</span>
<span class="t" style="left:1235.80px;top:326px;font-size:15px;color:#cacaca;letter-spacing:0.030px;">$625.82</span>
<span class="t" style="left:1333.30px;top:326px;font-size:15px;color:#cacaca;letter-spacing:0.030px;">$0.00</span>
<span class="t" style="left:1430.80px;top:326px;font-size:15px;color:#cacaca;letter-spacing:0.030px;">60.00</span>
<span class="t" style="left:1528.30px;top:326px;font-size:15px;color:#cacaca;letter-spacing:0.030px;">$1,900.00</span>
<span class="t" style="left:1625.80px;top:326px;font-size:15px;color:#cacaca;letter-spacing:0.030px;">$1,855.00</span>
<span class="t" style="left:1723.30px;top:326px;font-size:15px;color:#cacaca;letter-spacing:0.030px;">$1,229.18</span>
<span class="t" style="left:1820.80px;top:326px;font-size:15px;color:#cacaca;letter-spacing:-0.220px;">0.76%</span>
<span class="t" style="left:29.30px;top:352px;font-size:15px;color:#cacaca;letter-spacing:0.500px;">4/1/2025</span>
<span class="t" style="left:123.70px;top:352px;font-size:15px;color:#cacaca;letter-spacing:0.030px;">1</span>
<span class="t" style="left:153.20px;top:352px;font-size:15px;color:#cacaca;letter-spacing:0.030px;">$110,222.50</span>
<span class="t" style="left:269.70px;top:352px;font-size:15px;color:#cacaca;letter-spacing:0.030px;">$640.82</span>
<span class="t" style="left:358.00px;top:352px;font-size:15px;color:#cacaca;letter-spacing:0.030px;">$640.82</span>
<span class="t" style="left:455.80px;top:352px;font-size:15px;color:#cacaca;letter-spacing:0.030px;">$0.00</span>
<span class="t" style="left:553.30px;top:352px;font-size:15px;color:#cacaca;letter-spacing:0.030px;">$4.18</span>
<span class="t" style="left:650.80px;top:352px;font-size:15px;color:#cacaca;letter-spacing:0.030px;">$0.00</span>
<span class="t" style="left:748.30px;top:352px;font-size:15px;color:#cacaca;letter-spacing:0.030px;">$0.00</span>
<span class="t" style="left:845.80px;top:352px;font-size:15px;color:#cacaca;letter-spacing:-0.220px;">100.00%</span>
<span class="t" style="left:943.30px;top:352px;font-size:15px;color:#cacaca;letter-spacing:0.030px;">$640.82</span>
<span class="t" style="left:1040.80px;top:352px;font-size:15px;color:#cacaca;letter-spacing:0.030px;">$640.82</span>
<span class="t" style="left:1138.30px;top:352px;font-size:15px;color:#cacaca;letter-spacing:0.030px;">$0.00</span>
<span class="t" style="left:1235.80px;top:352px;font-size:15px;color:#cacaca;letter-spacing:0.030px;">$640.82</span>
<span class="t" style="left:1333.30px;top:352px;font-size:15px;color:#cacaca;letter-spacing:0.030px;">$0.00</span>
<span class="t" style="left:1430.80px;top:352px;font-size:15px;color:#cacaca;letter-spacing:0.030px;">240.00</span>
<span class="t" style="left:1528.30px;top:352px;font-size:15px;color:#cacaca;letter-spacing:0.030px;">$500.00</span>
<span class="t" style="left:1625.80px;top:352px;font-size:15px;color:#cacaca;letter-spacing:0.030px;">$1,055.00</span>
<span class="t" style="left:1723.30px;top:352px;font-size:15px;color:#cacaca;letter-spacing:0.030px;">$414.18</span>
<span class="t" style="left:1820.80px;top:352px;font-size:15px;color:#cacaca;letter-spacing:-0.220px;">0.76%</span>
<span class="t" style="left:29.30px;top:377px;font-size:15px;color:#cacaca;letter-spacing:0.500px;">5/1/2025</span>
<span class="t" style="left:123.70px;top:377px;font-size:15px;color:#cacaca;letter-spacing:0.030px;">1</span>
<span class="t" style="left:153.20px;top:377px;font-size:15px;color:#cacaca;letter-spacing:0.030px;">$111,133.32</span>
<span class="t" style="left:269.70px;top:377px;font-size:15px;color:#cacaca;letter-spacing:0.030px;">$910.82</span>
<span class="t" style="left:358.00px;top:377px;font-size:15px;color:#cacaca;letter-spacing:0.030px;">$910.82</span>
<span class="t" style="left:455.80px;top:377px;font-size:15px;color:#cacaca;letter-spacing:0.030px;">$0.00</span>
<span class="t" style="left:553.30px;top:377px;font-size:15px;color:#cacaca;letter-spacing:0.030px;">$4.18</span>
<span class="t" style="left:650.80px;top:377px;font-size:15px;color:#cacaca;letter-spacing:0.030px;">$0.00</span>
<span class="t" style="left:748.30px;top:377px;font-size:15px;color:#cacaca;letter-spacing:0.030px;">$0.00</span>
<span class="t" style="left:845.80px;top:377px;font-size:15px;color:#cacaca;letter-spacing:-0.220px;">100.00%</span>
<span class="t" style="left:943.30px;top:377px;font-size:15px;color:#cacaca;letter-spacing:0.030px;">$910.82</span>
<span class="t" style="left:1040.80px;top:377px;font-size:15px;color:#cacaca;letter-spacing:0.030px;">$910.82</span>
<span class="t" style="left:1138.30px;top:377px;font-size:15px;color:#cacaca;letter-spacing:0.030px;">$0.00</span>
<span class="t" style="left:1235.80px;top:377px;font-size:15px;color:#cacaca;letter-spacing:0.030px;">$910.82</span>
<span class="t" style="left:1333.30px;top:377px;font-size:15px;color:#cacaca;letter-spacing:0.030px;">$0.00</span>
<span class="t" style="left:1430.80px;top:377px;font-size:15px;color:#cacaca;letter-spacing:0.030px;">60.00</span>
<span class="t" style="left:1528.30px;top:377px;font-size:15px;color:#cacaca;letter-spacing:0.030px;">$1,005.00</span>
<span class="t" style="left:1625.80px;top:377px;font-size:15px;color:#cacaca;letter-spacing:0.030px;">$1,120.00</span>
<span class="t" style="left:1723.30px;top:377px;font-size:15px;color:#cacaca;letter-spacing:0.030px;">$209.18</span>
<span class="t" style="left:1820.80px;top:377px;font-size:15px;color:#cacaca;letter-spacing:-0.220px;">0.76%</span>
<span class="t" style="left:29.30px;top:403px;font-size:15px;color:#cacaca;letter-spacing:0.500px;">6/1/2025</span>
<span class="t" style="left:123.70px;top:403px;font-size:15px;color:#cacaca;letter-spacing:0.030px;">1</span>
<span class="t" style="left:153.20px;top:403px;font-size:15px;color:#cacaca;letter-spacing:0.030px;">$111,624.14</span>
<span class="t" style="left:269.70px;top:403px;font-size:15px;color:#cacaca;letter-spacing:0.030px;">$490.82</span>
<span class="t" style="left:358.00px;top:403px;font-size:15px;color:#cacaca;letter-spacing:0.030px;">$490.82</span>
<span class="t" style="left:455.80px;top:403px;font-size:15px;color:#cacaca;letter-spacing:0.030px;">$0.00</span>
<span class="t" style="left:553.30px;top:403px;font-size:15px;color:#cacaca;letter-spacing:0.030px;">$4.18</span>
<span class="t" style="left:650.80px;top:403px;font-size:15px;color:#cacaca;letter-spacing:0.030px;">$0.00</span>
<span class="t" style="left:748.30px;top:403px;font-size:15px;color:#cacaca;letter-spacing:0.030px;">$0.00</span>
<span class="t" style="left:845.80px;top:403px;font-size:15px;color:#cacaca;letter-spacing:-0.220px;">100.00%</span>
<span class="t" style="left:943.30px;top:403px;font-size:15px;color:#cacaca;letter-spacing:0.030px;">$490.82</span>
<span class="t" style="left:1040.80px;top:403px;font-size:15px;color:#cacaca;letter-spacing:0.030px;">$490.82</span>
<span class="t" style="left:1138.30px;top:403px;font-size:15px;color:#cacaca;letter-spacing:0.030px;">$0.00</span>
<span class="t" style="left:1235.80px;top:403px;font-size:15px;color:#cacaca;letter-spacing:0.030px;">$490.82</span>
<span class="t" style="left:1333.30px;top:403px;font-size:15px;color:#cacaca;letter-spacing:0.030px;">$0.00</span>
<span class="t" style="left:1430.80px;top:403px;font-size:15px;color:#cacaca;letter-spacing:0.030px;">360.00</span>
<span class="t" style="left:1528.30px;top:403px;font-size:15px;color:#cacaca;letter-spacing:0.030px;">$1,350.00</span>
<span class="t" style="left:1625.80px;top:403px;font-size:15px;color:#cacaca;letter-spacing:0.030px;">$1,220.00</span>
<span class="t" style="left:1723.30px;top:403px;font-size:15px;color:#cacaca;letter-spacing:0.030px;">$729.18</span>
<span class="t" style="left:1820.80px;top:403px;font-size:15px;color:#cacaca;letter-spacing:-0.220px;">0.76%</span>
<span class="t" style="left:29.30px;top:429px;font-size:15px;color:#cacaca;letter-spacing:0.500px;">7/1/2025</span>
<span class="t" style="left:123.70px;top:429px;font-size:15px;color:#cacaca;letter-spacing:0.030px;">1</span>
<span class="t" style="left:153.20px;top:429px;font-size:15px;color:#cacaca;letter-spacing:0.030px;">$112,219.96</span>
<span class="t" style="left:269.70px;top:429px;font-size:15px;color:#cacaca;letter-spacing:0.030px;">$595.82</span>
<span class="t" style="left:358.00px;top:429px;font-size:15px;color:#cacaca;letter-spacing:0.030px;">$595.82</span>
<span class="t" style="left:455.80px;top:429px;font-size:15px;color:#cacaca;letter-spacing:0.030px;">$0.00</span>
<span class="t" style="left:553.30px;top:429px;font-size:15px;color:#cacaca;letter-spacing:0.030px;">$4.18</span>
<span class="t" style="left:650.80px;top:429px;font-size:15px;color:#cacaca;letter-spacing:0.030px;">$0.00</span>
<span class="t" style="left:748.30px;top:429px;font-size:15px;color:#cacaca;letter-spacing:0.030px;">$0.00</span>
<span class="t" style="left:845.80px;top:429px;font-size:15px;color:#cacaca;letter-spacing:-0.220px;">100.00%</span>
<span class="t" style="left:943.30px;top:429px;font-size:15px;color:#cacaca;letter-spacing:0.030px;">$595.82</span>
<span class="t" style="left:1040.80px;top:429px;font-size:15px;color:#cacaca;letter-spacing:0.030px;">$595.82</span>
<span class="t" style="left:1138.30px;top:429px;font-size:15px;color:#cacaca;letter-spacing:0.030px;">$0.00</span>
<span class="t" style="left:1235.80px;top:429px;font-size:15px;color:#cacaca;letter-spacing:0.030px;">$595.82</span>
<span class="t" style="left:1333.30px;top:429px;font-size:15px;color:#cacaca;letter-spacing:0.030px;">$0.00</span>
<span class="t" style="left:1430.80px;top:429px;font-size:15px;color:#cacaca;letter-spacing:0.030px;">180.00</span>
<span class="t" style="left:1528.30px;top:429px;font-size:15px;color:#cacaca;letter-spacing:0.030px;">$685.00</span>
<span class="t" style="left:1625.80px;top:429px;font-size:15px;color:#cacaca;letter-spacing:0.030px;">$600.00</span>
<span class="t" style="left:1723.30px;top:429px;font-size:15px;color:#cacaca;letter-spacing:0.030px;">$4.18</span>
<span class="t" style="left:1820.80px;top:429px;font-size:15px;color:#cacaca;letter-spacing:-0.220px;">0.76%</span>
<span class="t" style="left:29.30px;top:454px;font-size:15px;color:#cacaca;letter-spacing:0.500px;">8/1/2025</span>
<span class="t" style="left:123.70px;top:454px;font-size:15px;color:#cacaca;letter-spacing:0.030px;">2</span>
<span class="t" style="left:153.20px;top:454px;font-size:15px;color:#cacaca;letter-spacing:0.030px;">$118,351.60</span>
<span class="t" style="left:269.70px;top:454px;font-size:15px;color:#cacaca;letter-spacing:0.030px;">$6,131.64</span>
<span class="t" style="left:358.00px;top:454px;font-size:15px;color:#cacaca;letter-spacing:0.030px;">$7,305.82</span>
<span class="t" style="left:455.80px;top:454px;font-size:15px;color:#ea1212;letter-spacing:-0.120px;">($1,174.18)</span>
<span class="t" style="left:553.30px;top:454px;font-size:15px;color:#cacaca;letter-spacing:0.030px;">$8.36</span>
<span class="t" style="left:650.80px;top:454px;font-size:15px;color:#ea1212;letter-spacing:-0.120px;">($1,174.18)</span>
<span class="t" style="left:748.30px;top:454px;font-size:15px;color:#ea1212;letter-spacing:-0.120px;">($1,174.18)</span>
<span class="t" style="left:845.80px;top:454px;font-size:15px;color:#cacaca;letter-spacing:-0.220px;">50.00%</span>
<span class="t" style="left:943.30px;top:454px;font-size:15px;color:#cacaca;letter-spacing:0.030px;">$3,065.82</span>
<span class="t" style="left:1040.80px;top:454px;font-size:15px;color:#cacaca;letter-spacing:0.030px;">$7,305.82</span>
<span class="t" style="left:1138.30px;top:454px;font-size:15px;color:#ea1212;letter-spacing:-0.120px;">($1,174.18)</span>
<span class="t" style="left:1235.80px;top:454px;font-size:15px;color:#cacaca;letter-spacing:0.030px;">$7,305.82</span>
<span class="t" style="left:1333.30px;top:454px;font-size:15px;color:#ea1212;letter-spacing:-0.120px;">($1,174.18)</span>
<span class="t" style="left:1430.80px;top:454px;font-size:15px;color:#cacaca;letter-spacing:0.030px;">3.42</span>
<span class="t" style="left:1528.30px;top:454px;font-size:15px;color:#cacaca;letter-spacing:0.030px;">$5,882.50</span>
<span class="t" style="left:1625.80px;top:454px;font-size:15px;color:#cacaca;letter-spacing:0.030px;">$3,977.50</span>
<span class="t" style="left:1723.30px;top:454px;font-size:15px;color:#cacaca;letter-spacing:0.030px;">$911.68</span>
<span class="t" style="left:1820.80px;top:454px;font-size:15px;color:#cacaca;letter-spacing:-0.220px;">1.53%</span>
<span class="t" style="left:29.30px;top:480px;font-size:15px;color:#cacaca;letter-spacing:0.500px;">9/1/2025</span>
<span class="t" style="left:123.70px;top:480px;font-size:15px;color:#cacaca;letter-spacing:0.030px;">1</span>
<span class="t" style="left:153.20px;top:480px;font-size:15px;color:#cacaca;letter-spacing:0.030px;">$120,412.42</span>
<span class="t" style="left:269.70px;top:480px;font-size:15px;color:#cacaca;letter-spacing:0.030px;">$2,060.82</span>
<span class="t" style="left:358.00px;top:480px;font-size:15px;color:#cacaca;letter-spacing:0.030px;">$2,060.82</span>
<span class="t" style="left:455.80px;top:480px;font-size:15px;color:#cacaca;letter-spacing:0.030px;">$0.00</span>
<span class="t" style="left:553.30px;top:480px;font-size:15px;color:#cacaca;letter-spacing:0.030px;">$4.18</span>
<span class="t" style="left:650.80px;top:480px;font-size:15px;color:#cacaca;letter-spacing:0.030px;">$0.00</span>
<span class="t" style="left:748.30px;top:480px;font-size:15px;color:#cacaca;letter-spacing:0.030px;">$0.00</span>
<span class="t" style="left:845.80px;top:480px;font-size:15px;color:#cacaca;letter-spacing:-0.220px;">100.00%</span>
<span class="t" style="left:943.30px;top:480px;font-size:15px;color:#cacaca;letter-spacing:0.030px;">$2,060.82</span>
<span class="t" style="left:1040.80px;top:480px;font-size:15px;color:#cacaca;letter-spacing:0.030px;">$2,060.82</span>
<span class="t" style="left:1138.30px;top:480px;font-size:15px;color:#cacaca;letter-spacing:0.030px;">$0.00</span>
<span class="t" style="left:1235.80px;top:480px;font-size:15px;color:#cacaca;letter-spacing:0.030px;">$2,060.82</span>
<span class="t" style="left:1333.30px;top:480px;font-size:15px;color:#cacaca;letter-spacing:0.030px;">$0.00</span>
<span class="t" style="left:1430.80px;top:480px;font-size:15px;color:#cacaca;letter-spacing:0.030px;">120.00</span>
<span class="t" style="left:1528.30px;top:480px;font-size:15px;color:#cacaca;letter-spacing:0.030px;">$130.00</span>
<span class="t" style="left:1625.80px;top:480px;font-size:15px;color:#cacaca;letter-spacing:0.030px;">$2,195.00</span>
<span class="t" style="left:1723.30px;top:480px;font-size:15px;color:#cacaca;letter-spacing:0.030px;">$134.18</span>
<span class="t" style="left:1820.80px;top:480px;font-size:15px;color:#cacaca;letter-spacing:-0.220px;">0.76%</span>
</div>
<svg class="r" style="left:136px;top:124px" width="222" height="391" viewBox="136 124 222 391"><path fill-rule="evenodd" fill="#3a52f5" d="M149.79999999999998 128.2H344.4A9.6 9.6 0 0 1 354.0 137.79999999999998V500.7A9.6 9.6 0 0 1 344.4 510.3H149.79999999999998A9.6 9.6 0 0 1 140.2 500.7V137.79999999999998A9.6 9.6 0 0 1 149.79999999999998 128.2ZM150.0 134.8H345.2A3.0 3.0 0 0 1 348.2 137.8V500.7A3.0 3.0 0 0 1 345.2 503.7H150.0A3.0 3.0 0 0 1 147.0 500.7V137.8A3.0 3.0 0 0 1 150.0 134.8Z"/></svg>
</body></html>
